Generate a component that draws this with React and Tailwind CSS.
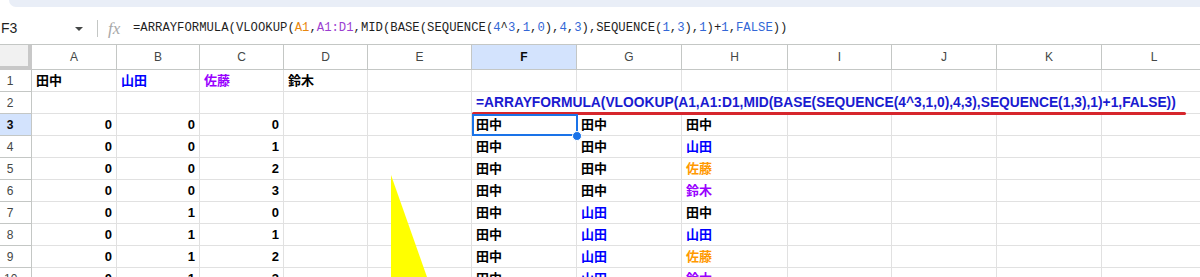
import React from "react";

const BLUE = "text-[#0000ff]";
const PURPLE = "text-[#9900ff]";
const ORANGE = "text-[#ff9900]";
const BLACK = "text-black";

const colW = [85, 83, 84, 84, 104, 105, 105, 106, 104, 105, 105, 105];
const colNames = ["A", "B", "C", "D", "E", "F", "G", "H", "I", "J", "K", "L"];

const nameColor = { "田中": BLACK, "山田": BLUE, "佐藤": ORANGE, "鈴木": PURPLE };

const rows = [
  ["0", "0", "0", "田中", "田中", "田中"],
  ["0", "0", "1", "田中", "田中", "山田"],
  ["0", "0", "2", "田中", "田中", "佐藤"],
  ["0", "0", "3", "田中", "田中", "鈴木"],
  ["0", "1", "0", "田中", "山田", "田中"],
  ["0", "1", "1", "田中", "山田", "山田"],
  ["0", "1", "2", "田中", "山田", "佐藤"],
  ["0", "1", "3", "田中", "山田", "鈴木"],
];

const cellFont = "font-['Liberation_Sans','Noto_Sans_CJK_JP',sans-serif]";

function RowHeader({ n, active }) {
  return (
    <div
      className={`w-[32px] h-[22px] shrink-0 border-r border-b border-[#c4c7c5] flex items-center pl-[4px] text-[12px] ${
        active ? "bg-[#d3e3fd] font-bold text-[#0b0b0b]" : "text-[#444746]"
      }`}
    >
      <span className="w-[12px] text-center">{n}</span>
    </div>
  );
}

function Cell({ w, children, right, className = "", noBorderR }) {
  return (
    <div
      className={`h-[22px] shrink-0 border-b border-[#e1e1e1] ${
        noBorderR ? "" : "border-r"
      } flex items-center ${right ? "justify-end pr-[4px]" : "pl-[4px]"} font-bold text-[13px] leading-none whitespace-nowrap ${className}`}
      style={{ width: w }}
    >
      {children}
    </div>
  );
}

export default function App() {
  return (
    <div className={`relative w-[1200px] h-[277px] overflow-hidden bg-white ${cellFont}`}>
      {/* top band */}
      <div className="h-[7px] ml-[9px] bg-[#e9eef7] rounded-bl-[12px]" />

      {/* formula bar */}
      <div className="h-[38px] flex items-center pt-[6px] border-b border-[#c4c7c5]">
        <div className="w-[72px] pl-[1px] text-[14px] text-[#1f1f1f] font-['Liberation_Sans',sans-serif]">F3</div>
        <svg width="10" height="6" viewBox="0 0 10 6" className="ml-[2px]">
          <path d="M1 1 L9 1 L5 5 Z" fill="#444746" />
        </svg>
        <div className="w-px h-[17px] bg-[#c4c7c5] ml-[13px]" />
        <div className="ml-[10px] w-[24px] text-[17px] italic text-[#a8a8a8] font-['Liberation_Serif',serif] leading-none">
          fx
        </div>
        <div className="ml-[1px] text-[12.25px] text-[#1f1f1f] font-['Liberation_Mono',monospace] whitespace-nowrap">
          =ARRAYFORMULA(VLOOKUP(
          <span className="text-[#e8870e]">A1</span>,
          <span className="text-[#9c3fd1]">A1:D1</span>,MID(BASE(SEQUENCE(
          <span className="text-[#3367d6]">4</span>^<span className="text-[#3367d6]">3</span>,
          <span className="text-[#3367d6]">1</span>,<span className="text-[#3367d6]">0</span>),
          <span className="text-[#3367d6]">4</span>,<span className="text-[#3367d6]">3</span>),SEQUENCE(
          <span className="text-[#3367d6]">1</span>,<span className="text-[#3367d6]">3</span>),
          <span className="text-[#3367d6]">1</span>)+<span className="text-[#3367d6]">1</span>,
          <span className="text-[#3367d6]">FALSE</span>))
        </div>
      </div>

      {/* column headers */}
      <div className="flex">
        <div className="w-[32px] h-[25px] shrink-0 bg-[#f1f1f1] border-r-[4px] border-b-[4px] border-[#c8c8c8]" />
        {colNames.map((c, i) => (
          <div
            key={c}
            className={`h-[25px] shrink-0 border-r border-b border-[#c4c7c5] flex items-center justify-center text-[12px] ${
              c === "F" ? "bg-[#d3e3fd] font-bold text-[#0b0b0b]" : "text-[#444746]"
            }`}
            style={{ width: colW[i] }}
          >
            {c}
          </div>
        ))}
      </div>

      {/* row 1 */}
      <div className="flex">
        <RowHeader n="1" />
        <Cell w={colW[0]} className={BLACK}>田中</Cell>
        <Cell w={colW[1]} className={BLUE}>山田</Cell>
        <Cell w={colW[2]} className={PURPLE}>佐藤</Cell>
        <Cell w={colW[3]} className={BLACK}>鈴木</Cell>
        {colW.slice(4).map((w, i) => (
          <Cell key={i} w={w} />
        ))}
      </div>

      {/* row 2 */}
      <div className="flex">
        <RowHeader n="2" />
        {colW.slice(0, 5).map((w, i) => (
          <Cell key={i} w={w} />
        ))}
        <div className="relative flex">
          {colW.slice(5).map((w, i) => (
            <Cell key={i} w={w} noBorderR />
          ))}
          <div className="absolute left-[4px] top-0 h-[22px] flex items-center font-bold text-[13.8px] text-[#1a1ad0] whitespace-nowrap">
            =ARRAYFORMULA(VLOOKUP(A1,A1:D1,MID(BASE(SEQUENCE(4^3,1,0),4,3),SEQUENCE(1,3),1)+1,FALSE))
          </div>
        </div>
      </div>

      {/* data rows */}
      {rows.map((r, idx) => (
        <div className="flex" key={idx}>
          <RowHeader n={String(idx + 3)} active={idx === 0} />
          <Cell w={colW[0]} right className={BLACK}>{r[0]}</Cell>
          <Cell w={colW[1]} right className={BLACK}>{r[1]}</Cell>
          <Cell w={colW[2]} right className={BLACK}>{r[2]}</Cell>
          <Cell w={colW[3]} />
          <Cell w={colW[4]} />
          <Cell w={colW[5]} className={nameColor[r[3]]}>{r[3]}</Cell>
          <Cell w={colW[6]} className={nameColor[r[4]]}>{r[4]}</Cell>
          <Cell w={colW[7]} className={nameColor[r[5]]}>{r[5]}</Cell>
          {colW.slice(8).map((w, i) => (
            <Cell key={i} w={w} />
          ))}
        </div>
      ))}

      {/* red underline annotation */}
      <div className="absolute left-[472px] top-[112px] w-[714px] h-[3px] rounded-full bg-[#d6262c]" />

      {/* selection F3 */}
      <div className="absolute left-[472px] top-[114px] w-[106px] h-[22px] border-2 border-[#1a73e8]" />
      <div className="absolute left-[572px] top-[131px] w-[10px] h-[10px] rounded-full bg-[#1a73e8] border border-white" />

      {/* yellow arrow shape */}
      <svg className="absolute left-[380px] top-[170px]" width="60" height="107" viewBox="0 0 60 107">
        <polygon points="11,5 11,107 47,107" fill="#ffff00" />
      </svg>
    </div>
  );
}
